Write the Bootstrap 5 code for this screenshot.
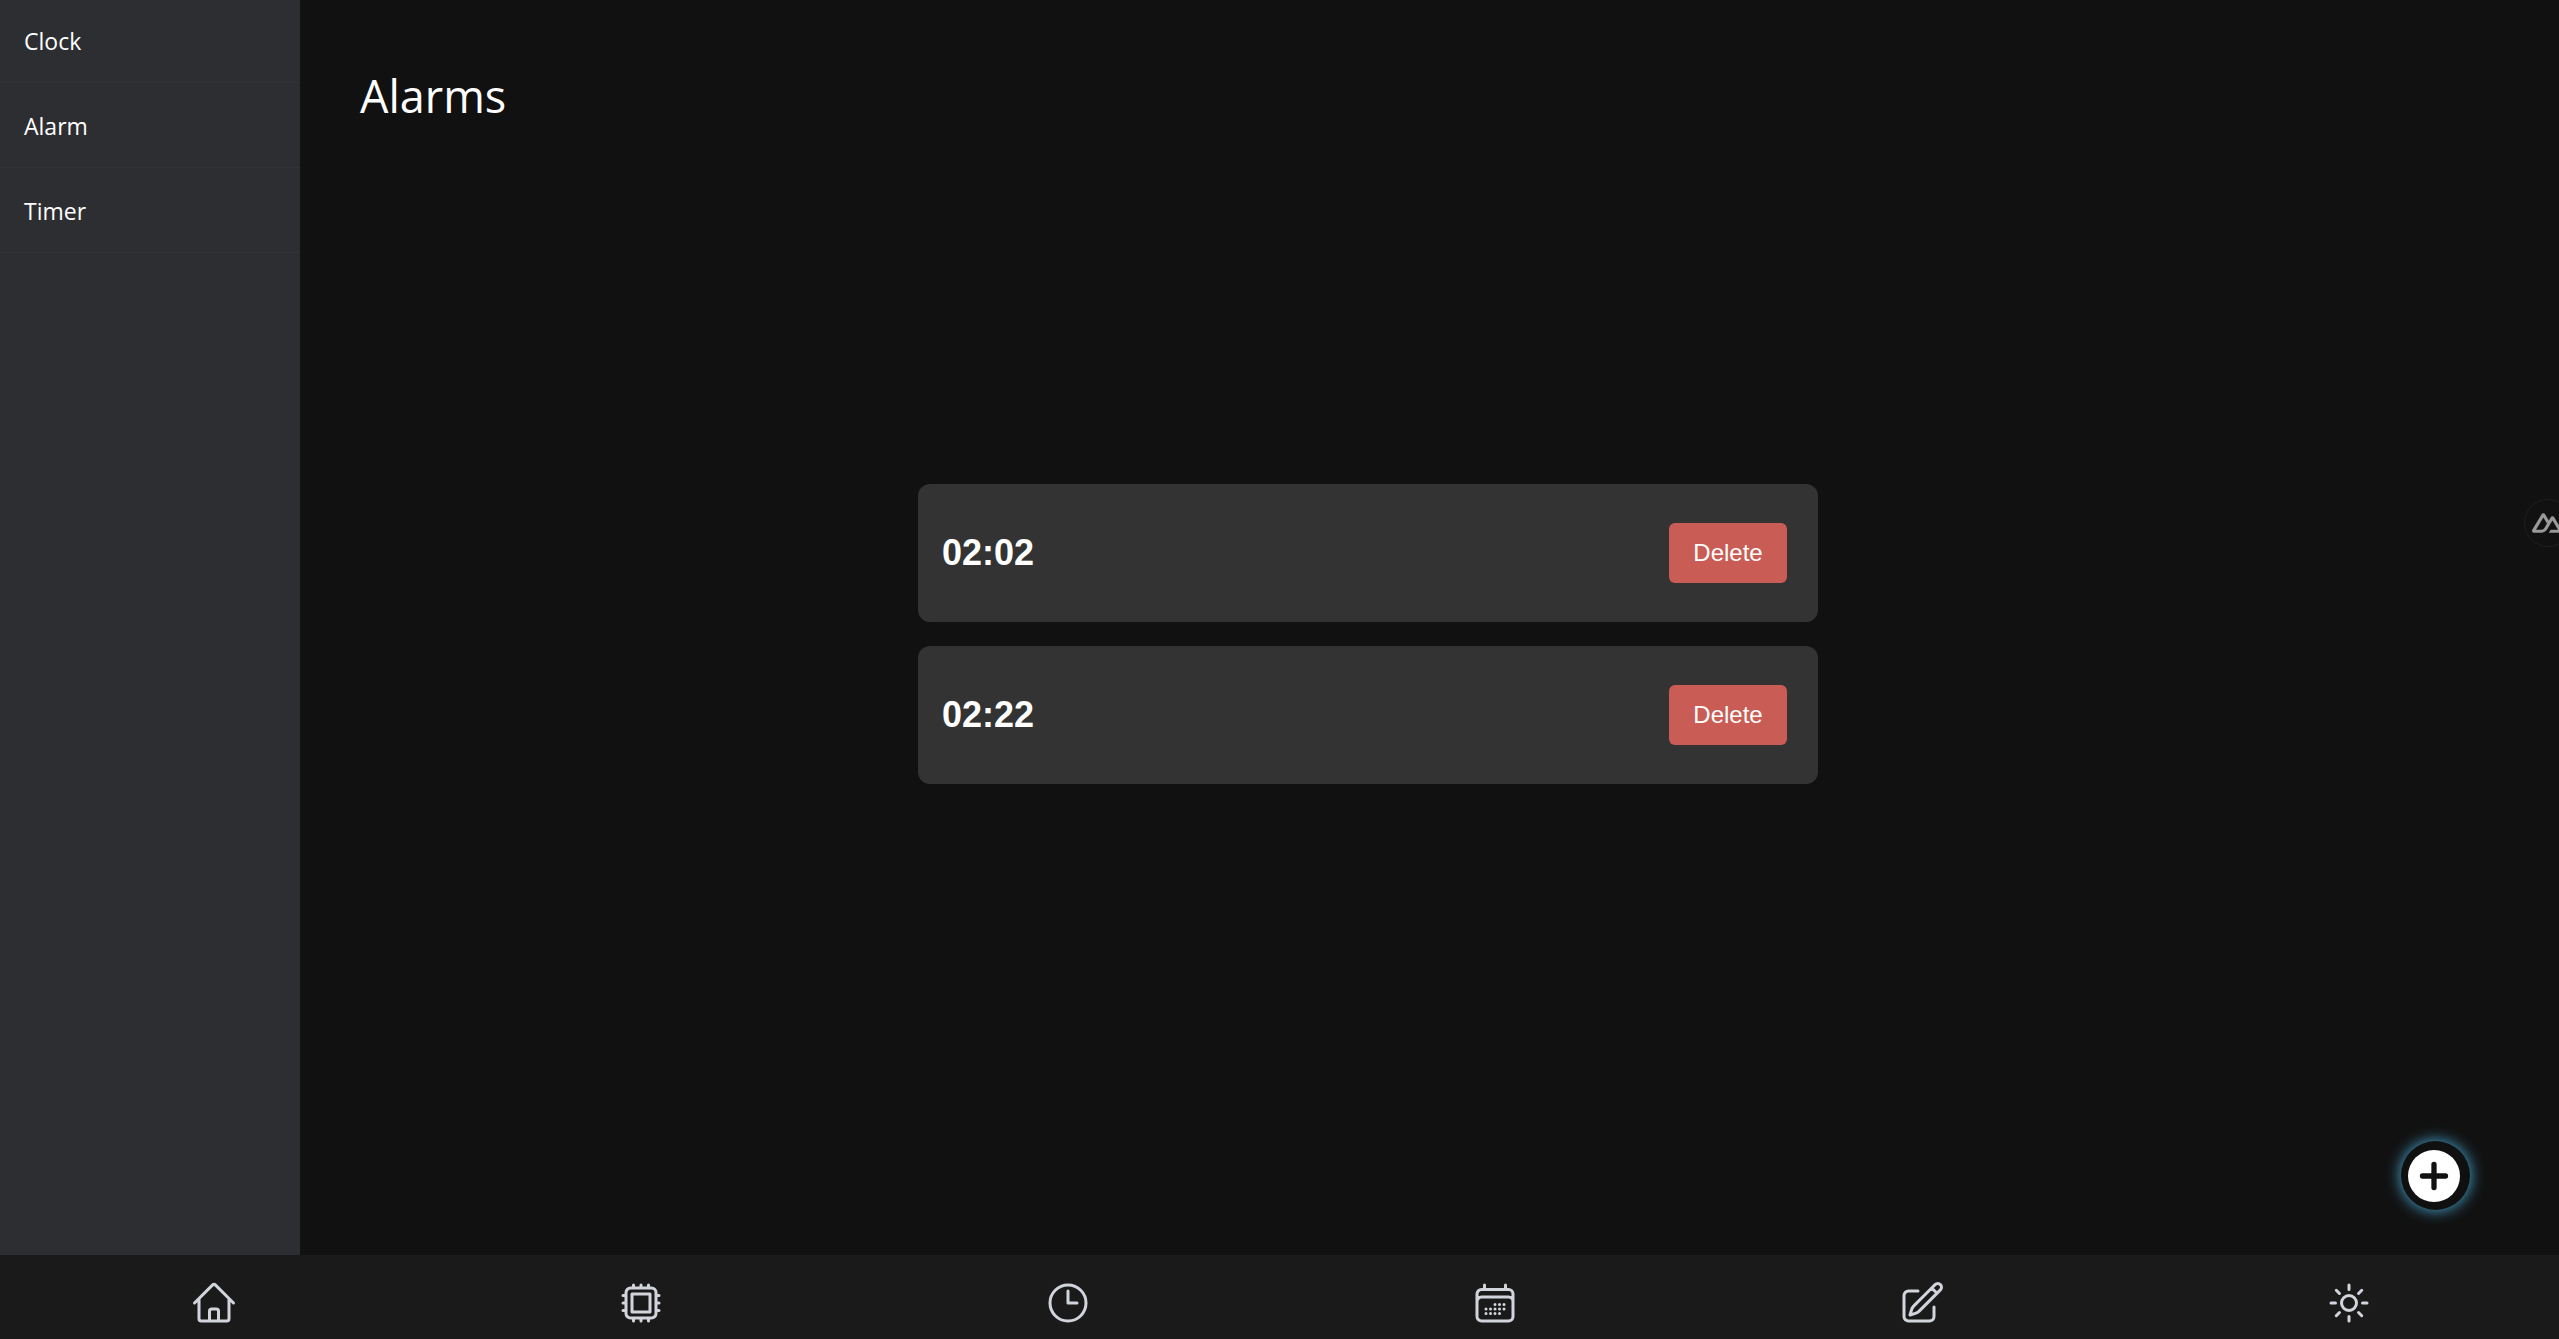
<!DOCTYPE html>
<html lang="en">
<head>
<meta charset="utf-8">
<meta name="viewport" content="width=device-width, initial-scale=1">
<title>Alarms</title>
<link rel="stylesheet" href="https://cdn.jsdelivr.net/npm/bootstrap@5.3.0/dist/css/bootstrap.min.css">
<style>
  body { background: #111; color: #fff; font-family: "Open Sans", "Noto Sans", sans-serif; }
  .side-menu { width: 300px; background: #2d2e32; }
  .side-menu a { padding: 25px 24px 23px; font-size: 23px; line-height: 36px; border-bottom: 1px solid #333; }
  .side-menu li:first-child a { padding-top: 23px; }
  .page-title { font-size: 45px; line-height: 72px; }
  .alarm-page { padding: 60px 183px 0 60px; }
  .alarm-list { width: 900px; max-width: 100%; margin-top: 352px; font-family: "Liberation Sans", Arial, sans-serif; }
  .alarm-item { background: #333; border-radius: 12px; padding: 39px 31px 39px 24px; }
  .alarm-time { font-size: 36px; line-height: 54px; }
  .btn-delete { --bs-btn-color: #fff; --bs-btn-bg: #c95c54; --bs-btn-hover-color: #fff; --bs-btn-hover-bg: #b34c45;
    --bs-btn-font-size: 24px; --bs-btn-padding-x: 24px; --bs-btn-padding-y: 12px; --bs-btn-line-height: 36px;
    --bs-btn-border-radius: 6px; --bs-btn-border-width: 0; font-family: inherit; min-width: 118px; }
  .btn-add { right: 89px; bottom: 129px; width: 69px; height: 69px; background: #101010; box-shadow: 0 0 15px #4cb4e0; }
  .tools-badge { right: -13px; top: 499px; width: 48px; height: 48px; padding: 7px; background: #111; border: 1px solid #202020; color: #999; }
  .bottom-bar { background: #1a1a1a; padding: 24px 0 12px; margin-right: -3px; }
  .bottom-bar a { color: #d1d5db; }
  .bottom-bar svg { fill: none; stroke: currentColor; stroke-width: 1.5; stroke-linecap: round; stroke-linejoin: round; }
</style>
<script src="https://cdn.jsdelivr.net/npm/bootstrap@5.3.0/dist/js/bootstrap.bundle.min.js"></script>
</head>
<body class="vh-100 d-flex flex-column overflow-hidden">
<div class="d-flex flex-grow-1">
  <nav class="side-menu flex-shrink-0" aria-label="Clock tools">
    <ul class="list-unstyled mb-0">
      <li><a class="d-block text-white text-decoration-none" href="#clock">Clock</a></li>
      <li><a class="d-block text-white text-decoration-none" href="#alarm">Alarm</a></li>
      <li><a class="d-block text-white text-decoration-none" href="#timer">Timer</a></li>
    </ul>
  </nav>
  <main class="alarm-page flex-grow-1">
    <h1 class="page-title fw-normal mb-0">Alarms</h1>
    <ul class="alarm-list list-unstyled mx-auto mb-0 d-flex flex-column gap-4">
      <li class="alarm-item d-flex align-items-center justify-content-between">
        <time class="alarm-time fw-bold">02:02</time>
        <button type="button" class="btn btn-delete">Delete</button>
      </li>
      <li class="alarm-item d-flex align-items-center justify-content-between">
        <time class="alarm-time fw-bold">02:22</time>
        <button type="button" class="btn btn-delete">Delete</button>
      </li>
    </ul>
  </main>
</div>

<nav class="bottom-bar d-flex" aria-label="Main">
  <a class="flex-fill d-flex justify-content-center" href="#home" aria-label="Home"><svg width="48" height="48" viewBox="0 0 24 24"><path d="m2.25 12 8.954-8.955c.44-.439 1.152-.439 1.591 0L21.75 12M4.5 9.75v10.125c0 .621.504 1.125 1.125 1.125H9.75v-4.875c0-.621.504-1.125 1.125-1.125h2.25c.621 0 1.125.504 1.125 1.125V21h4.125c.621 0 1.125-.504 1.125-1.125V9.75M8.25 21h8.25"/></svg></a>
  <a class="flex-fill d-flex justify-content-center" href="#system" aria-label="System"><svg width="48" height="48" viewBox="0 0 24 24"><path d="M8.25 3v1.5M4.5 8.25H3m18 0h-1.5M4.5 12H3m18 0h-1.5m-15 3.75H3m18 0h-1.5M8.25 19.5V21M12 3v1.5m0 15V21m3.75-18v1.5m0 15V21m-9-1.5h10.5a2.25 2.25 0 0 0 2.25-2.25V6.75a2.25 2.25 0 0 0-2.25-2.25H6.75A2.25 2.25 0 0 0 4.5 6.75v10.5a2.25 2.25 0 0 0 2.25 2.25Zm.75-12h9v9h-9v-9Z"/></svg></a>
  <a class="flex-fill d-flex justify-content-center" href="#time" aria-label="Clock"><svg width="48" height="48" viewBox="0 0 24 24"><path d="M12 6v6h4.5m4.5 0a9 9 0 1 1-18 0 9 9 0 0 1 18 0Z"/></svg></a>
  <a class="flex-fill d-flex justify-content-center" href="#calendar" aria-label="Calendar"><svg width="48" height="48" viewBox="0 0 24 24"><path d="M6.75 3v2.25M17.25 3v2.25M3 18.75V7.5a2.25 2.25 0 0 1 2.25-2.25h13.5A2.25 2.25 0 0 1 21 7.5v11.25m-18 0A2.25 2.25 0 0 0 5.25 21h13.5A2.25 2.25 0 0 0 21 18.75m-18 0v-7.5A2.25 2.25 0 0 1 5.25 9h13.5A2.25 2.25 0 0 1 21 11.25v7.5m-9-6h.008v.008H12v-.008ZM12 15h.008v.008H12V15Zm0 2.25h.008v.008H12v-.008ZM9.75 15h.008v.008H9.75V15Zm0 2.25h.008v.008H9.75v-.008ZM7.5 15h.008v.008H7.5V15Zm0 2.25h.008v.008H7.5v-.008Zm6.75-4.5h.008v.008h-.008v-.008Zm0 2.25h.008v.008h-.008V15Zm0 2.25h.008v.008h-.008v-.008Zm2.25-4.5h.008v.008H16.5v-.008Zm0 2.25h.008v.008H16.5V15Z"/></svg></a>
  <a class="flex-fill d-flex justify-content-center" href="#notes" aria-label="Notes"><svg width="48" height="48" viewBox="0 0 24 24"><path d="m16.862 4.487 1.687-1.688a1.875 1.875 0 1 1 2.652 2.652L10.582 16.07a4.5 4.5 0 0 1-1.897 1.13L6 18l.8-2.685a4.5 4.5 0 0 1 1.13-1.897l8.932-8.931Zm0 0L19.5 7.125M18 14v4.75A2.25 2.25 0 0 1 15.75 21H5.25A2.25 2.25 0 0 1 3 18.75V8.25A2.25 2.25 0 0 1 5.25 6H10"/></svg></a>
  <a class="flex-fill d-flex justify-content-center" href="#weather" aria-label="Weather"><svg width="48" height="48" viewBox="0 0 24 24"><path d="M12 3v2.25m6.364.386-1.591 1.591M21 12h-2.25m-.386 6.364-1.591-1.591M12 18.75V21m-4.773-4.227-1.591 1.591M5.25 12H3m4.227-4.773L5.636 5.636M15.75 12a3.75 3.75 0 1 1-7.5 0 3.75 3.75 0 0 1 7.5 0Z"/></svg></a>
</nav>

<button type="button" class="btn-add position-fixed border-0 p-0 rounded-circle d-flex" aria-label="Add alarm">
  <svg width="69" height="69" viewBox="0 0 69 69"><circle cx="33" cy="35" r="26" fill="#fff"/><path d="M33 23.5v23M21.500 35h23" fill="none" stroke="#111" stroke-width="5.3" stroke-linecap="round"/></svg>
</button>

<button type="button" class="tools-badge position-fixed rounded-circle d-flex align-items-center" aria-label="Developer tools">
  <svg width="30" height="30" viewBox="0 0 24 24" fill="currentColor"><path d="M13.4642 19.8295h8.9218c.2834 0 .5618-.0723.8072-.2098a1.5899 1.5899 0 0 0 .5908-.5732 1.5293 1.5293 0 0 0 .216-.783 1.529 1.529 0 0 0-.2167-.7828L17.7916 7.4142a1.5904 1.5904 0 0 0-.5907-.573 1.6524 1.6524 0 0 0-.807-.2099c-.2833 0-.5616.0724-.807.2098a1.5904 1.5904 0 0 0-.5907.5731L13.4642 9.99l-2.9954-5.0366a1.5913 1.5913 0 0 0-.591-.573 1.6533 1.6533 0 0 0-.8071-.2098c-.2834 0-.5617.0723-.8072.2097a1.5913 1.5913 0 0 0-.591.573L.2168 17.4808A1.5292 1.5292 0 0 0 0 18.2635c-.0001.2749.0744.545.216.783a1.59 1.59 0 0 0 .5908.5732c.2454.1375.5238.2098.8072.2098h5.6003c2.219 0 3.8554-.9454 4.9813-2.7899l2.7337-4.5922L16.3935 9.99l4.3944 7.382h-5.8587ZM7.123 17.3694l-3.9083-.0009 5.8586-9.8421 2.9232 4.921-1.9572 3.2892c-.7478 1.1967-1.5972 1.6328-2.9163 1.6328z"/></svg>
</button>
</body>
</html>
